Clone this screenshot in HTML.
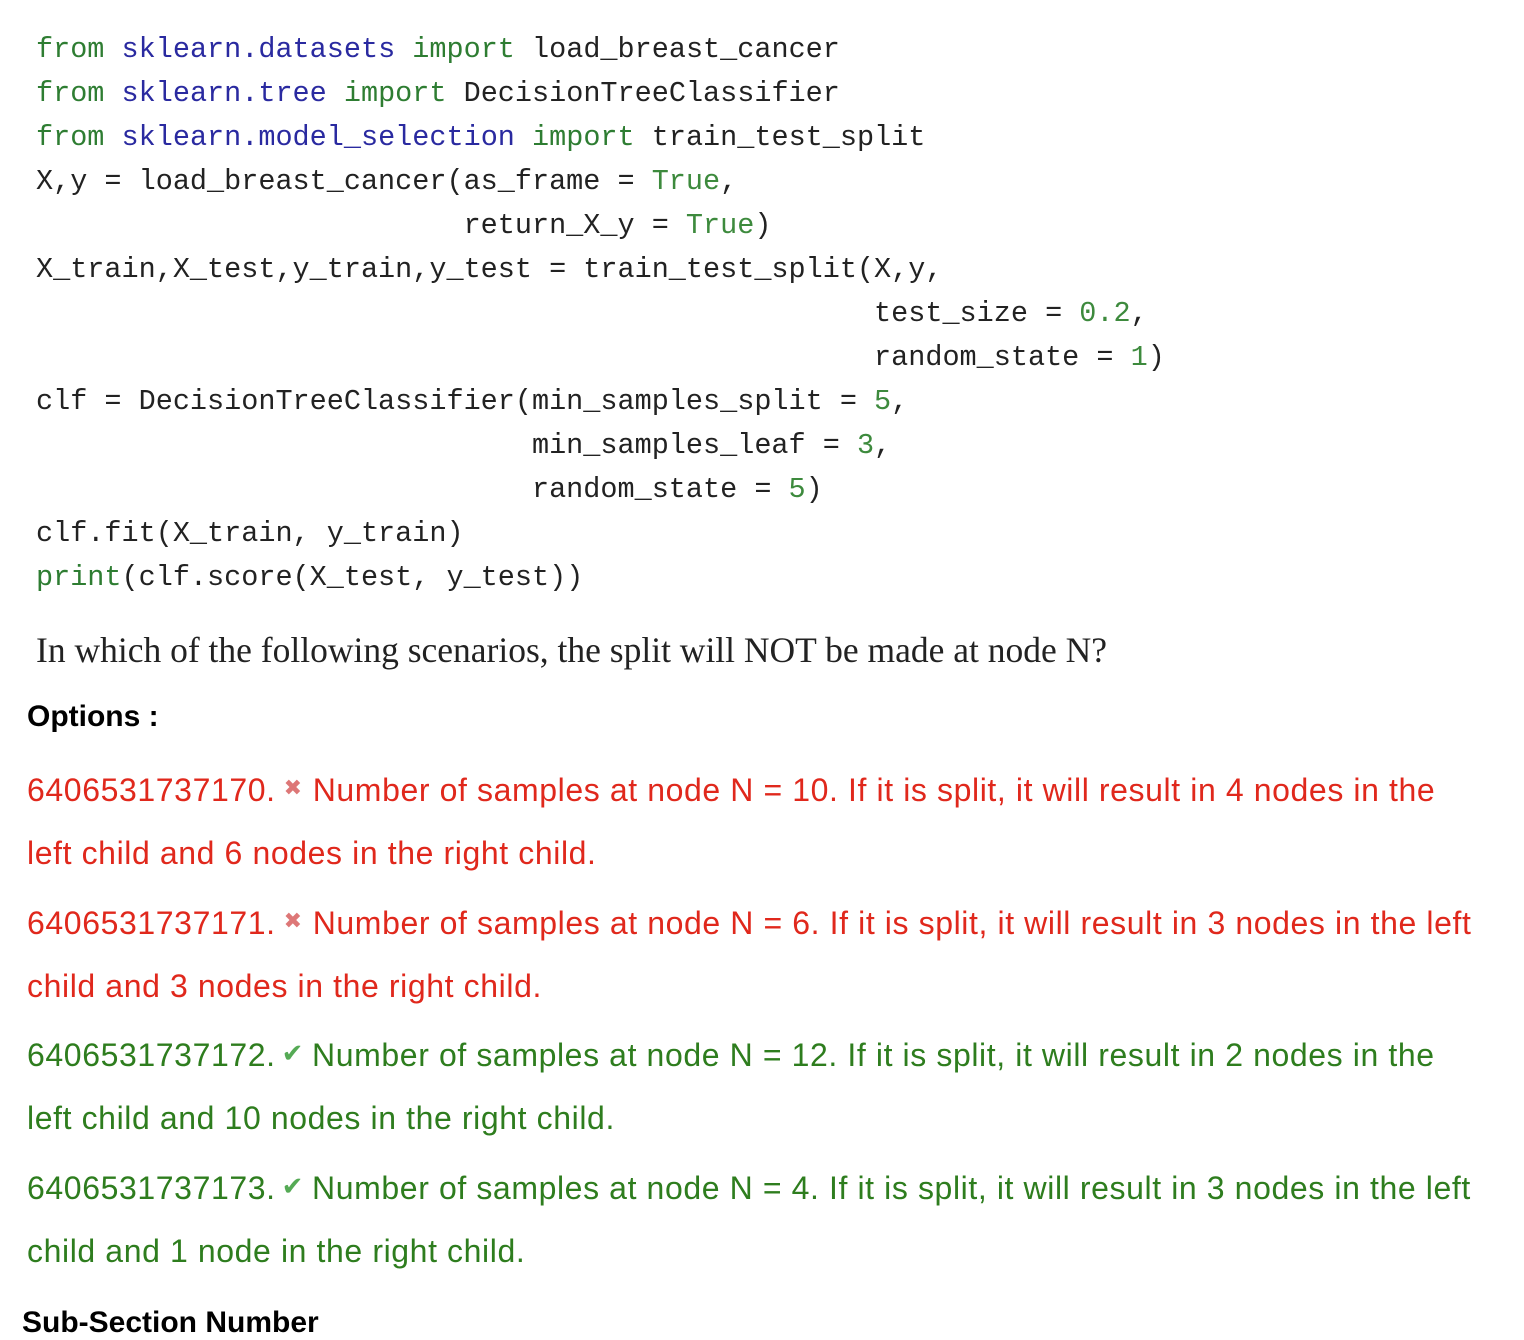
<!DOCTYPE html>
<html><head><meta charset="utf-8"><style>
body{margin:0;background:#fff;width:1524px;height:1316px;overflow:hidden;position:relative}
.code{position:absolute;left:36px;top:28px;font-family:"Liberation Mono",monospace;font-size:28.5px;color:#222;white-space:pre;line-height:44px}
.k{color:#2e7d32}.b{color:#2a2aa0}.n{color:#3d8a3d}
.q{position:absolute;left:36px;top:629px;font-family:"Liberation Serif",serif;font-size:35.5px;color:#222}
.opt{position:absolute;left:27px;top:700px;font-family:"Liberation Sans",sans-serif;font-size:30px;font-weight:bold;color:#000}
.o{position:absolute;left:27px;width:1455px;font-family:"Liberation Sans",sans-serif;font-size:32px;line-height:63px;letter-spacing:0.6px}
.r{color:#e0281c}.g{color:#2e7d1e}
.x{color:#d77;font-size:22px;vertical-align:6px;margin:0 10px 0 8px}
.c{color:#5a5;font-size:26px;vertical-align:4px;margin:0 8px 0 6px}
.sub{position:absolute;left:22px;top:1306px;font-family:"Liberation Sans",sans-serif;font-size:30px;font-weight:bold}
</style></head><body>
<div class="code"><span class="k">from</span> <span class="b">sklearn.datasets</span> <span class="k">import</span> load_breast_cancer
<span class="k">from</span> <span class="b">sklearn.tree</span> <span class="k">import</span> DecisionTreeClassifier
<span class="k">from</span> <span class="b">sklearn.model_selection</span> <span class="k">import</span> train_test_split
X,y = load_breast_cancer(as_frame = <span class="n">True</span>,
                         return_X_y = <span class="n">True</span>)
X_train,X_test,y_train,y_test = train_test_split(X,y,
                                                 test_size = <span class="n">0.2</span>,
                                                 random_state = <span class="n">1</span>)
clf = DecisionTreeClassifier(min_samples_split = <span class="n">5</span>,
                             min_samples_leaf = <span class="n">3</span>,
                             random_state = <span class="n">5</span>)
clf.fit(X_train, y_train)
<span class="k">print</span>(clf.score(X_test, y_test))</div>
<div class="q">In which of the following scenarios, the split will NOT be made at node N?</div>
<div class="opt">Options :</div>
<div class="o r" style="top:756px">6406531737170.<span class="x">✖</span>Number of samples at node N = 10. If it is split, it will result in 4 nodes in the left child and 6 nodes in the right child.</div>
<div class="o r" style="top:889px">6406531737171.<span class="x">✖</span>Number of samples at node N = 6. If it is split, it will result in 3 nodes in the left child and 3 nodes in the right child.</div>
<div class="o g" style="top:1022px">6406531737172.<span class="c">✔</span>Number of samples at node N = 12. If it is split, it will result in 2 nodes in the left child and 10 nodes in the right child.</div>
<div class="o g" style="top:1155px">6406531737173.<span class="c">✔</span>Number of samples at node N = 4. If it is split, it will result in 3 nodes in the left child and 1 node in the right child.</div>
<div class="sub">Sub-Section Number</div>
</body></html>
